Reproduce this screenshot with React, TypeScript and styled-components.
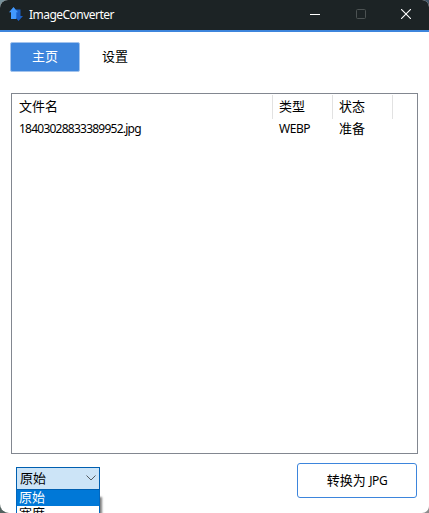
import React from "react";
import styled, { createGlobalStyle } from "styled-components";

const GlobalStyle = createGlobalStyle`
  * { box-sizing: border-box; }
  html, body { margin: 0; padding: 0; overflow: hidden; }
  body {
    font-family: "Noto Sans", "Noto Sans CJK SC", sans-serif;
    font-size: 13px;
    color: #000;
  }
`;

const Desktop = styled.div`
  height: 513px;
  overflow: hidden;
  background:
    linear-gradient(#77919a, #77919a) 0 0 / 50% 50% no-repeat,
    linear-gradient(#405468, #405468) 100% 0 / 50% 50% no-repeat,
    linear-gradient(#53625f, #53625f) 0 100% / 50% 50% no-repeat,
    linear-gradient(#8c8c8c, #8c8c8c) 100% 100% / 50% 50% no-repeat;
`;

const Window = styled.main`
  width: 429px;
  height: 513px;
  display: flex;
  flex-direction: column;
  overflow: hidden;
  border-radius: 8px 7px 7px 9px;
  background: #fff;
`;

const TitleBar = styled.header`
  height: 32px;
  flex: none;
  display: flex;
  align-items: center;
  padding-left: 9px;
  color: #fff;
  background: #1c2325;
  border-bottom: 2px solid #3d85dc;
`;

const AppIcon = styled.svg`
  width: 14px;
  height: 14px;
  margin-bottom: 2px;
`;

const Title = styled.h1`
  margin: 0 auto 0 6px;
  font-size: 12px;
  font-weight: 400;
  line-height: 28px;
  letter-spacing: -0.53px;
`;

const CaptionButton = styled.button`
  width: 45.5px;
  height: 30px;
  padding: 0 0 2px;
  border: 0;
  display: grid;
  place-items: center;
  background: transparent;
`;

const Tabs = styled.nav`
  display: flex;
  padding: 10px 10px 0;
`;

const Tab = styled.button<{ $active?: boolean }>`
  width: 70px;
  height: 30px;
  padding: 0 0 4px;
  font: inherit;
  border-radius: 2px;
  border: 1px solid ${(p) => (p.$active ? "#a2c3ed" : "transparent")};
  background: ${(p) => (p.$active ? "#3d85dc" : "transparent")};
  color: ${(p) => (p.$active ? "#fff" : "#000")};
`;

const FileList = styled.section`
  width: 407px;
  height: 361px;
  margin: 21px 0 0 11px;
  flex: none;
  border: 1px solid #828790;
  padding-top: 1px;
`;

const Row = styled.div<{ $header?: boolean }>`
  display: grid;
  grid-template-columns: 261px 60px 60px;
  height: ${(p) => (p.$header ? 24 : 20)}px;
  line-height: ${(p) => (p.$header ? 22 : 19)}px;
  > span {
    padding-left: 6px;
    white-space: nowrap;
    border-right: 1px solid ${(p) => (p.$header ? "#e2e2e2" : "transparent")};
  }
  > span:first-child {
    padding-left: 7px;
  }
`;

const Latin = styled.span<{ $track: number }>`
  font-size: 12px;
  letter-spacing: ${(p) => p.$track}px;
`;

const Footer = styled.footer`
  display: flex;
  justify-content: space-between;
  align-items: flex-start;
  padding: 9px 12px 0 16px;
`;

const Picker = styled.div`
  width: 84px;
  margin-top: 4px;
`;

const Combo = styled.div`
  height: 23px;
  display: flex;
  justify-content: space-between;
  align-items: center;
  padding: 0 3px 1px;
  line-height: 19px;
  border: 1px solid #005fb0;
  background: #cce4f7;
`;

const Options = styled.div`
  height: 40px;
  border: 1px solid #0067c0;
  border-top: 0;
  background: #fff;
  box-shadow: 3px 6px 2px -1px rgba(0, 0, 0, 0.5);
`;

const Option = styled.div<{ $selected?: boolean }>`
  height: 16px;
  padding-left: 2px;
  line-height: 15px;
  color: ${(p) => (p.$selected ? "#fff" : "#000")};
  background: ${(p) => (p.$selected ? "#0078d7" : "#fff")};
`;

const ConvertButton = styled.button`
  width: 120px;
  height: 35px;
  padding: 0 0 2px;
  font: inherit;
  white-space: nowrap;
  border: 1px solid #3d85dc;
  border-radius: 3px;
  background: #fff;
  color: #000;
`;

export default function App() {
  return (
    <Desktop>
      <GlobalStyle />
      <Window>
        <TitleBar>
          <AppIcon viewBox="0 0 14 14">
            <path d="M7 2.500h4.500V9H14l-4.500 5L5.500 9.500H7z" fill="#1b60c8" />
            <path d="M4.500 0L9 5.200H7.300V12H2V5.200H0z" fill="#4299ff" />
          </AppIcon>
          <Title>ImageConverter</Title>
          <CaptionButton aria-label="Minimize">
            <svg width="10" height="10">
              <path d="M0 5.500h10" stroke="#fff" />
            </svg>
          </CaptionButton>
          <CaptionButton aria-label="Maximize">
            <svg width="10" height="10">
              <rect x=".5" y=".5" width="9" height="9" rx="1" fill="none" stroke="#4c5253" />
            </svg>
          </CaptionButton>
          <CaptionButton aria-label="Close">
            <svg width="10" height="10">
              <path d="M0 0l10 10M10 0L0 10" stroke="#fff" strokeWidth="1.100" />
            </svg>
          </CaptionButton>
        </TitleBar>
        <Tabs>
          <Tab $active>主页</Tab>
          <Tab>设置</Tab>
        </Tabs>
        <FileList>
          <Row $header>
            <span>文件名</span>
            <span>类型</span>
            <span>状态</span>
          </Row>
          <Row>
            <span><Latin $track={-0.76}>18403028833389952.jpg</Latin></span>
            <span><Latin $track={-0.45}>WEBP</Latin></span>
            <span>准备</span>
          </Row>
        </FileList>
        <Footer>
          <Picker>
            <Combo>
              <span>原始</span>
              <svg width="10" height="6">
                <path d="M.5 .5L5 5L9.500 .5" fill="none" stroke="#555b60" />
              </svg>
            </Combo>
            <Options>
              <Option $selected>原始</Option>
              <Option>宽度</Option>
            </Options>
          </Picker>
          <ConvertButton>
            转换为 <Latin $track={-0.4}>JPG</Latin>
          </ConvertButton>
        </Footer>
      </Window>
    </Desktop>
  );
}
